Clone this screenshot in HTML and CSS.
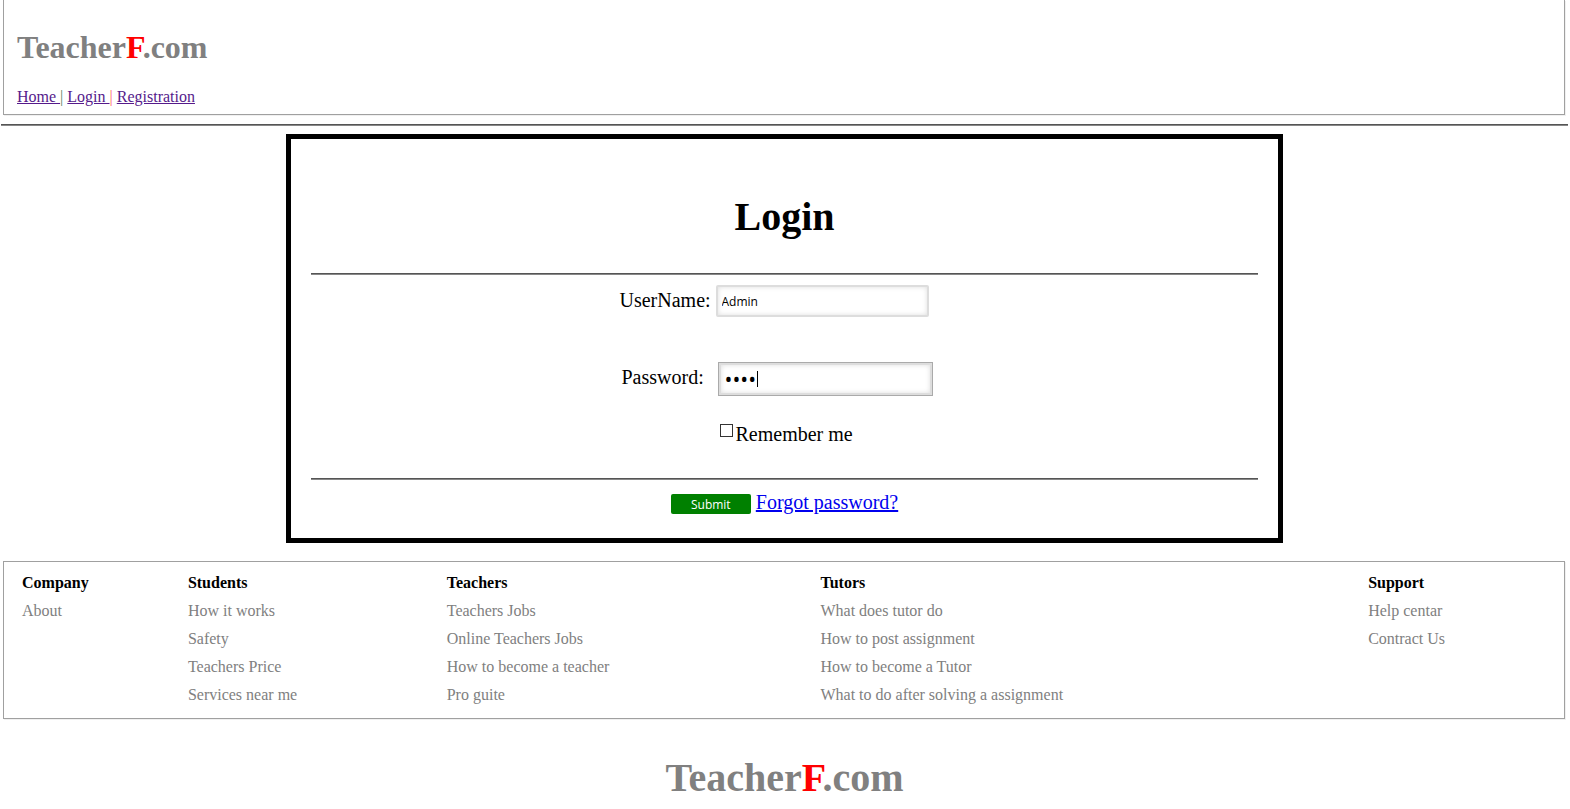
FILE: index.html
```html
<!DOCTYPE html>
<html lang="en">
<head>
<meta charset="utf-8">
<title>TeacherF.com - Login</title>
<link rel="stylesheet" href="styles.css">
</head>
<body>
<header class="panel site-header">
  <h1 class="brand">Teacher<span class="accent">F</span>.com</h1>
  <nav class="nav"><a href="#home">Home </a><span class="bar-green">|</span> <a href="#login">Login </a><span class="bar-red">|</span> <a href="#registration">Registration</a></nav>
</header>
<hr class="rule page-rule">
<main>
  <form class="login">
    <h2 class="login-title">Login</h2>
    <hr class="rule">
    <div class="fields">
      <div class="field">
        <label class="field-label" for="username">UserName:</label>
        <input class="text-input" id="username" type="text" value="Admin">
      </div>
      <div class="field field-password">
        <label class="field-label" for="password">Password:</label>
        <span class="password-box">
          <input class="text-input active" id="password" type="password" value="1234">
          <span class="caret"></span>
        </span>
      </div>
      <div class="remember">
        <input class="tick" id="remember" type="checkbox">
        <label for="remember">Remember me</label>
      </div>
    </div>
    <hr class="rule">
    <div class="actions">
      <button class="submit" type="submit">Submit</button>
      <a class="forgot" href="#forgot">Forgot password?</a>
    </div>
  </form>
</main>
<footer>
  <div class="panel links">
    <section>
      <h3>Company</h3>
      <ul><li><a href="#about">About</a></li></ul>
    </section>
    <section>
      <h3>Students</h3>
      <ul>
        <li><a href="#how">How it works</a></li>
        <li><a href="#safety">Safety</a></li>
        <li><a href="#price">Teachers Price</a></li>
        <li><a href="#services">Services near me</a></li>
      </ul>
    </section>
    <section>
      <h3>Teachers</h3>
      <ul>
        <li><a href="#jobs">Teachers Jobs</a></li>
        <li><a href="#online">Online Teachers Jobs</a></li>
        <li><a href="#teacher">How to become a teacher</a></li>
        <li><a href="#pro">Pro guite</a></li>
      </ul>
    </section>
    <section>
      <h3>Tutors</h3>
      <ul>
        <li><a href="#tutor-do">What does tutor do</a></li>
        <li><a href="#post">How to post assignment</a></li>
        <li><a href="#tutor">How to become a Tutor</a></li>
        <li><a href="#after">What to do after solving a assignment</a></li>
      </ul>
    </section>
    <section>
      <h3>Support</h3>
      <ul>
        <li><a href="#help">Help centar</a></li>
        <li><a href="#contact">Contract Us</a></li>
      </ul>
    </section>
  </div>
  <p class="brand brand-large">Teacher<span class="accent">F</span>.com</p>
</footer>
</body>
</html>
```
FILE: styles.css
```css
* { box-sizing: border-box; }

body {
  margin: 0 2px 0 1px;
  background: #fff;
  color: #000;
  font-family: "Liberation Serif", "Times New Roman", serif;
  font-size: 16px;
}

h1, h2, h3, p, ul { margin: 0; padding: 0; }
li { list-style: none; }

.panel {
  margin: 0 3px 0 2px;
  border: 1px solid #a0a0a0;
  box-shadow: 1px 1px 0 #f0f0f0;
}

.site-header {
  padding: 29px 13px 8px;
  border-top: 0;
}

.brand {
  color: #808080;
  font-size: 32px;
  font-weight: bold;
  line-height: 36px;
}
.accent { color: #f00; }

.nav {
  margin-top: 23px;
  line-height: 18px;
}
.nav a { color: #551a8b; white-space: pre; }
.bar-green { color: #586; }
.bar-red { color: #f66; }

.rule {
  height: 2px;
  margin: 0;
  border: 0;
  border-top: 1px solid #555;
  background: #888;
}
.page-rule { margin: 9px 0 8px; }

.login {
  margin: 0 285px;
  padding: 20px;
  border: 5px solid #000;
  font-size: 20px;
}
.login-title {
  padding: 35px 0 33px;
  font-size: 40px;
  line-height: 46px;
  text-align: center;
}

.fields {
  width: fit-content;
  margin: 0 auto;
  padding: 10px 17px 32px 0;
}
.field { display: flex; align-items: flex-start; }
.field-password { margin-top: 45px; padding-left: 2px; }
.field-label { width: 96px; line-height: 30px; }

.text-input {
  width: 213px;
  height: 32px;
  padding: 0 4px;
  border: 2px solid #ddd;
  border-radius: 2px;
  box-shadow: inset 0 0 5px #ddd;
  background: #fff;
  color: #000;
  font: 12px "Open Sans", "Noto Sans", sans-serif;
}
.password-box {
  position: relative;
  display: flex;
  border: 1px solid #aaa;
}
.text-input.active { border-radius: 0; font-size: 21px; }
.caret {
  position: absolute;
  top: 8px;
  left: 38px;
  width: 1px;
  height: 16px;
  background: #000;
}

.remember {
  display: flex;
  align-items: flex-start;
  gap: 3px;
  margin-top: 27px;
  padding-left: 100px;
  line-height: 23px;
}
.tick {
  appearance: none;
  width: 13px;
  height: 13px;
  margin: 1px 0 0;
  border: 1px solid #333;
  background: #fff;
}

.actions {
  display: flex;
  justify-content: center;
  align-items: flex-end;
  gap: 5px;
  padding: 11px 0 4px;
  line-height: 23px;
}
.submit {
  width: 80px;
  height: 20px;
  padding: 0;
  border: 0;
  border-radius: 2px;
  background: #008000;
  color: #fff;
  font: 12px "Open Sans", "Noto Sans", sans-serif;
}
.forgot { color: #00e; }

.links {
  display: grid;
  grid-template-columns: 166fr 259fr 374fr 548fr 196fr;
  margin-top: 18px;
  padding: 7px 0 9px 18px;
}
.links h3, .links li {
  font-size: 16px;
  line-height: 28px;
}
.links a { color: #808080; text-decoration: none; }

.brand-large {
  padding: 36px 0 8px;
  font-size: 40px;
  line-height: 46px;
  text-align: center;
}
```
